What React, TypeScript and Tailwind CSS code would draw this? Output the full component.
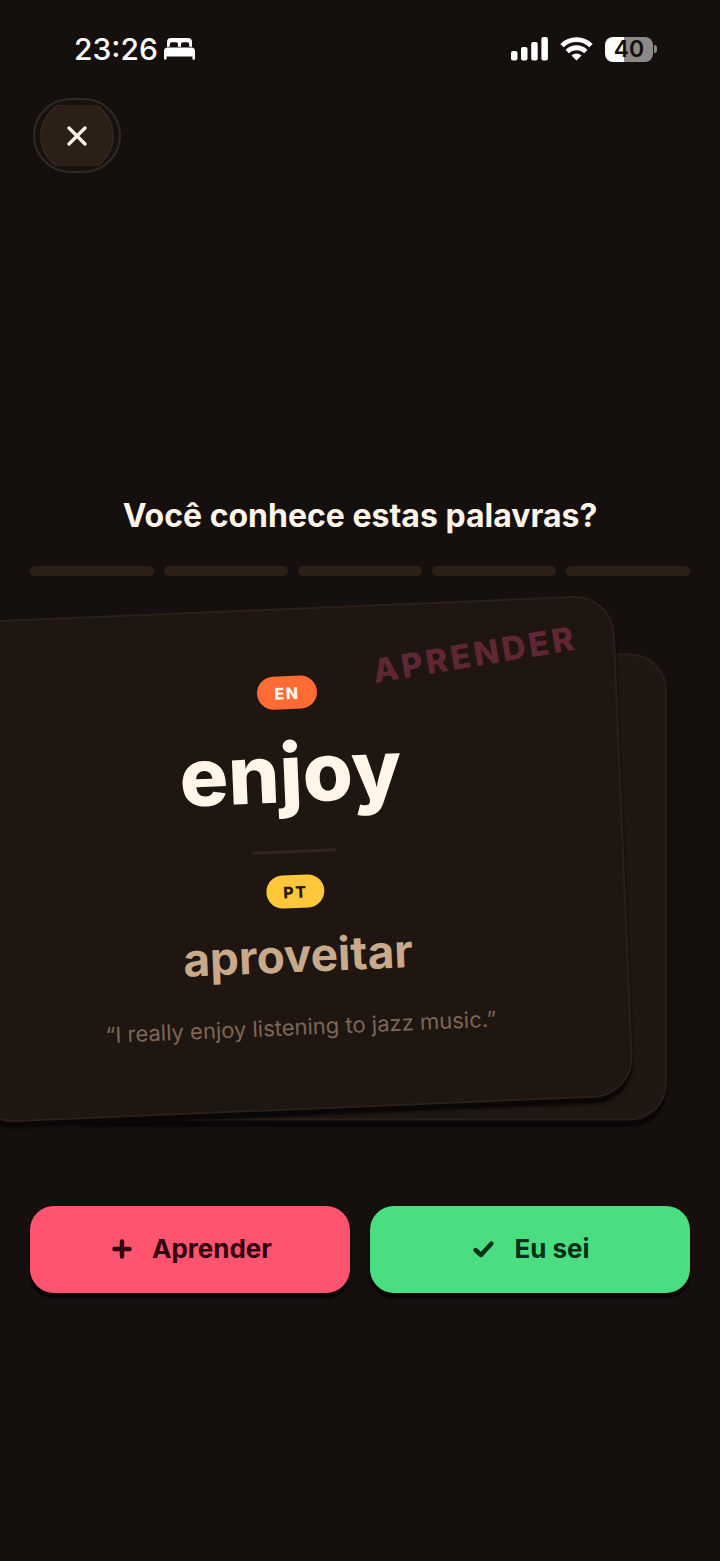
import React, { useState } from "react";

type Word = {
  en: string;
  pt: string;
  example: string;
};

const word: Word = {
  en: "enjoy",
  pt: "aproveitar",
  example: "I really enjoy listening to jazz music.",
};

const TOTAL_WORDS = 5;

const StatusBar: React.FC = () => (
  <div className="flex h-[98px] items-center justify-between pl-[74px] pr-[63px]">
    <div className="flex items-center gap-1.5 text-white">
      <span className="text-[30px] leading-10 font-medium">23:26</span>
      <svg width="31" height="22" viewBox="0 0 31 22" fill="currentColor" aria-hidden="true">
        <path d="M3 8.800V4a4 4 0 0 1 4-4h17a4 4 0 0 1 4 4v4.800h-2.800V6a1.800 1.800 0 0 0-1.800-1.800h-4.600A1.800 1.800 0 0 0 17 6v2.800h-3V6a1.800 1.800 0 0 0-1.800-1.800H7.600A1.800 1.800 0 0 0 5.800 6v2.800Z" />
        <path d="M3.500 9.500h24a3.500 3.500 0 0 1 3.500 3.500V20.500a1.300 1.300 0 0 1-2.600 0V18.500H2.600V20.500a1.300 1.300 0 0 1-2.600 0V13A3.500 3.500 0 0 1 3.500 9.500Z" />
      </svg>
    </div>

    <div className="flex items-center gap-3 text-white">
      {/* Signal */}
      <svg width="37" height="24" viewBox="0 0 37 24" fill="currentColor" aria-hidden="true">
        <rect x="0" y="14" width="6.500" height="9.500" rx="2" />
        <rect x="10" y="10" width="6.500" height="13.500" rx="2" />
        <rect x="20.200" y="5" width="6.500" height="18.500" rx="2" />
        <rect x="30.400" y="0" width="6.500" height="23.500" rx="2" />
      </svg>

      {/* Wi-Fi */}
      <svg width="33" height="24" viewBox="0 0 33 24" aria-hidden="true">
        <g fill="none" stroke="currentColor" strokeWidth="4.800">
          <path d="M2 8.600a20.700 20.700 0 0 1 29 0" />
          <path d="M7.200 14.600a13.200 13.200 0 0 1 18.600 0" />
        </g>
        <path d="M16.500 23.600l-5-5a7.200 7.200 0 0 1 10 0Z" fill="currentColor" />
      </svg>

      {/* Battery */}
      <div className="flex items-center gap-px">
        <div className="flex h-[25px] w-12 items-center justify-center rounded-lg bg-linear-to-r from-white from-40% to-[#8c8988] to-40% text-[23px] leading-6 font-semibold text-[#15100d]">
          40
        </div>
        <div className="h-2 w-[3px] rounded-r-full bg-[#8c8988]" />
      </div>
    </div>
  </div>
);

const App: React.FC = () => {
  const [known, setKnown] = useState(0);

  return (
    <div className="flex min-h-screen flex-col overflow-hidden bg-[#15100d] font-['Inter',sans-serif] text-[#fff6e9]">
      <StatusBar />

      <header className="px-[33px]">
        <button
          type="button"
          aria-label="Fechar"
          className="flex h-[75px] w-[88px] items-center justify-center rounded-full border-2 border-[#2e2a28] bg-[#17110f]"
        >
          <span className="flex h-[61px] items-center overflow-hidden">
            <span className="flex size-[74px] items-center justify-center rounded-full border-2 border-[#33251d] bg-[#2c1f18]">
              <svg width="20" height="20" viewBox="0 0 20 20" fill="none" aria-hidden="true">
                <path d="M2 2l16 16M18 2L2 18" stroke="currentColor" strokeWidth="3.200" strokeLinecap="round" />
              </svg>
            </span>
          </span>
        </button>
      </header>

      <main className="flex flex-1 flex-col justify-center px-[30px] pt-[54px]">
        <h1 className="text-center text-[32px] leading-10 font-bold">Você conhece estas palavras?</h1>

        {/* Progress */}
        <div className="mt-[30px] flex gap-[10px]">
          {Array.from({ length: TOTAL_WORDS }, (_, i) => (
            <div
              key={i}
              className={`h-[10px] flex-1 rounded-full ${i < known ? "bg-[#4ade80]" : "bg-[#2c1f18]"}`}
            />
          ))}
        </div>

        {/* Card stack */}
        <div className="relative mt-8">
          <div className="absolute inset-0 translate-y-7 scale-93 rounded-[40px] border-2 border-[#2c1f18] bg-[#201612] shadow-[0_6px_2px_#0a0706]" />

          <div className="relative flex -translate-x-[66px] -rotate-[2.4deg] flex-col items-center rounded-[40px] border-2 border-[#2c1f18] bg-[#1f1611] pt-[66px] pb-[65px] shadow-[0_6px_3px_#0a0706]">
            <span className="absolute top-8 right-9 -rotate-7 text-[33px] leading-10 font-extrabold tracking-widest text-[#5f2734]">
              APRENDER
            </span>

            <span className="flex h-[33px] items-center rounded-full bg-[#ff6b35] px-[17px] text-base font-extrabold tracking-widest text-[#fff6e9]">
              EN
            </span>
            <h2 className="mt-4 text-[81px] leading-24 font-extrabold">{word.en}</h2>

            <div className="mt-[29px] h-[3px] w-[83px] bg-[#33251d]" />

            <span className="mt-[22px] flex h-[33px] items-center rounded-full bg-[#ffc83a] px-[17px] text-base font-extrabold tracking-widest text-[#2a1a08]">
              PT
            </span>
            <p className="mt-[19px] text-[46px] leading-14 font-bold text-[#c8a98a]">{word.pt}</p>
            <p className="mt-7 text-[22px] leading-8 text-[#7d6657]">“{word.example}”</p>
          </div>
        </div>

        {/* Actions */}
        <div className="mt-24 grid grid-cols-2 gap-5">
          <button
            type="button"
            onClick={() => setKnown(0)}
            className="flex h-[87px] items-center justify-center gap-4 rounded-3xl bg-[#ff5470] text-[26px] leading-8 font-bold text-[#33000d] shadow-[0_5px_2px_#050303]"
          >
            <svg width="28" height="28" viewBox="0 0 28 28" fill="none" aria-hidden="true">
              <path d="M14 6.500v15M6.500 14h15" stroke="currentColor" strokeWidth="4.500" strokeLinecap="round" />
            </svg>
            Aprender
          </button>
          <button
            type="button"
            onClick={() => setKnown(Math.min(known + 1, TOTAL_WORDS))}
            className="flex h-[87px] items-center justify-center gap-4 rounded-3xl bg-[#4ade80] text-[26px] leading-8 font-bold text-[#03301a] shadow-[0_5px_2px_#050303]"
          >
            <svg width="28" height="28" viewBox="0 0 28 28" fill="none" aria-hidden="true">
              <path d="M5.500 15l5.500 5L21.500 8.500" stroke="currentColor" strokeWidth="4.400" strokeLinecap="round" strokeLinejoin="round" />
            </svg>
            Eu sei
          </button>
        </div>
      </main>
    </div>
  );
};

export default App;
